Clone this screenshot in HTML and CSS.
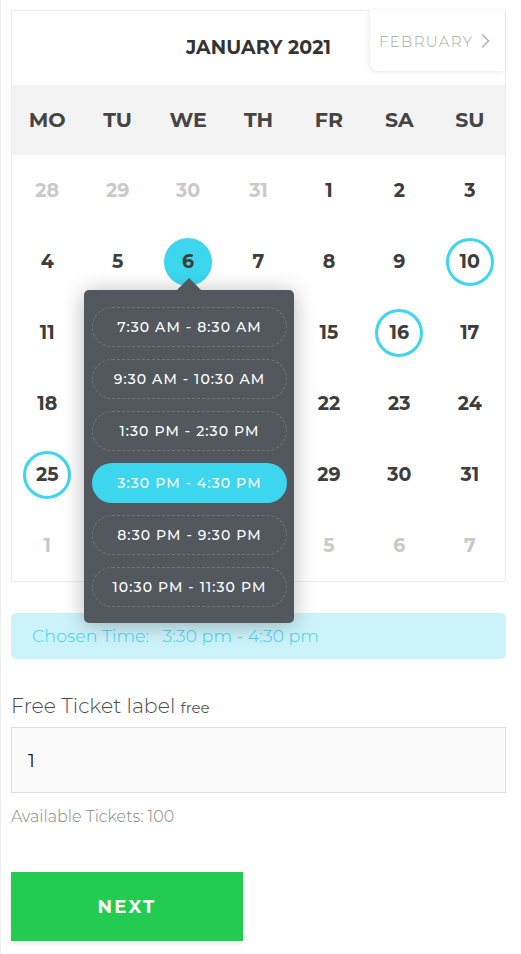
FILE: index.html
```html
<!DOCTYPE html>
<html lang="en">
<head>
<meta charset="utf-8">
<title>Booking</title>
<link rel="stylesheet" href="styles.css">
</head>
<body>
<div class="page">
  <div class="calendar">
    <div class="cal-head">
      <div class="month">JANUARY 2021</div>
      <div class="next-month">FEBRUARY
        <svg class="chev" width="10" height="16" viewBox="0 0 10 16"><path d="M2 1.5 L8.5 8 L2 14.5" fill="none" stroke="#b5b5b5" stroke-width="1.6"/></svg>
      </div>
    </div>
    <div class="weekdays">
      <div>MO</div><div>TU</div><div>WE</div><div>TH</div><div>FR</div><div>SA</div><div>SU</div>
    </div>
    <div class="days">
      <div class="day muted"><span>28</span></div>
      <div class="day muted"><span>29</span></div>
      <div class="day muted"><span>30</span></div>
      <div class="day muted"><span>31</span></div>
      <div class="day"><span>1</span></div>
      <div class="day"><span>2</span></div>
      <div class="day"><span>3</span></div>

      <div class="day"><span>4</span></div>
      <div class="day"><span>5</span></div>
      <div class="day"><span class="selected">6</span></div>
      <div class="day"><span>7</span></div>
      <div class="day"><span>8</span></div>
      <div class="day"><span>9</span></div>
      <div class="day"><span class="avail">10</span></div>

      <div class="day"><span>11</span></div>
      <div class="day covered"><span>12</span></div>
      <div class="day covered"><span>13</span></div>
      <div class="day covered"><span>14</span></div>
      <div class="day"><span>15</span></div>
      <div class="day"><span class="avail">16</span></div>
      <div class="day"><span>17</span></div>

      <div class="day"><span>18</span></div>
      <div class="day covered"><span>19</span></div>
      <div class="day covered"><span>20</span></div>
      <div class="day covered"><span>21</span></div>
      <div class="day"><span>22</span></div>
      <div class="day"><span>23</span></div>
      <div class="day"><span>24</span></div>

      <div class="day"><span class="avail">25</span></div>
      <div class="day covered"><span>26</span></div>
      <div class="day covered"><span>27</span></div>
      <div class="day covered"><span>28</span></div>
      <div class="day"><span>29</span></div>
      <div class="day"><span>30</span></div>
      <div class="day"><span>31</span></div>

      <div class="day muted"><span>1</span></div>
      <div class="day muted covered"><span>2</span></div>
      <div class="day muted covered"><span>3</span></div>
      <div class="day muted covered"><span>4</span></div>
      <div class="day muted"><span>5</span></div>
      <div class="day muted"><span>6</span></div>
      <div class="day muted"><span>7</span></div>
    </div>

    <div class="popover">
      <div class="slot">7:30 AM - 8:30 AM</div>
      <div class="slot">9:30 AM - 10:30 AM</div>
      <div class="slot">1:30 PM - 2:30 PM</div>
      <div class="slot active">3:30 PM - 4:30 PM</div>
      <div class="slot">8:30 PM - 9:30 PM</div>
      <div class="slot">10:30 PM - 11:30 PM</div>
    </div>
  </div>

  <div class="chosen">Chosen Time:&nbsp;&nbsp; 3:30 pm - 4:30 pm</div>

  <div class="ticket-label">Free Ticket label <small>free</small></div>
  <div class="qty">1</div>
  <div class="avail-text">Available Tickets: 100</div>

  <button class="next-btn">NEXT</button>
</div>
</body>
</html>
```
FILE: styles.css
```css
* { box-sizing: border-box; }
html, body { margin: 0; padding: 0; background: #fff; }
body {
  font-family: "Montserrat", Inter, "Noto Sans", sans-serif;
  color: #444;
}
.page {
  width: 521px;
  min-height: 954px;
  padding: 10px 15px 0 10px;
  border-left: 1px solid #f0f0f0;
}
.calendar {
  position: relative;
  width: 495px;
  border: 1px solid #ececec;
}
.cal-head {
  position: relative;
  height: 74px;
  display: flex;
  align-items: center;
  justify-content: center;
}
.month {
  font-weight: 700;
  font-size: 19px;
  color: #333;
  letter-spacing: 0.1px;
  margin-top: -1px;
}
.next-month {
  position: absolute;
  top: -1px;
  right: 0;
  width: 135px;
  height: 61px;
  display: flex;
  align-items: center;
  justify-content: flex-start;
  gap: 7px;
  padding-left: 9px;
  padding-top: 1px;
  font-size: 15px;
  font-weight: 300;
  letter-spacing: 1.3px;
  color: #a8a8a8;
  background: #fff;
  border-radius: 0 0 0 8px;
  box-shadow: -1px 1px 4px rgba(0,0,0,0.09);
}
.chev { margin-top: -1px; }
.weekdays {
  display: grid;
  grid-template-columns: repeat(7, 1fr);
  background: #f3f3f3;
  height: 70px;
  align-items: center;
  text-align: center;
  font-weight: 700;
  font-size: 20.5px;
  color: #444;
  padding-bottom: 1px;
}
.days {
  display: grid;
  grid-template-columns: repeat(7, 1fr);
  grid-auto-rows: 71px;
}
.day {
  display: flex;
  align-items: center;
  justify-content: center;
  font-weight: 700;
  font-size: 19px;
  color: #3d3d3d;
}
.day span {
  width: 48px;
  height: 48px;
  border-radius: 50%;
  display: flex;
  align-items: center;
  justify-content: center;
}
.day.muted { color: #c9c9c9; }
.day.covered span { visibility: hidden; }
.day .avail { border: 3px solid #3dd6ef; }
.day .selected { background: #3dd6ef; }

.popover {
  position: absolute;
  left: 72px;
  top: 279px;
  width: 210px;
  padding: 17px 7px 16px 8px;
  background: #53585f;
  border-radius: 5px;
  box-shadow: 0 2px 22px rgba(0,0,0,0.28);
  display: flex;
  flex-direction: column;
  gap: 12px;
}
.popover::before {
  content: "";
  position: absolute;
  top: -12px;
  left: 93px;
  border-left: 12px solid transparent;
  border-right: 12px solid transparent;
  border-bottom: 12px solid #53585f;
}
.slot {
  height: 40px;
  border-radius: 20px;
  border: 1px dashed rgba(255,255,255,0.18);
  color: #fff;
  font-size: 14px;
  font-weight: 500;
  letter-spacing: 1.1px;
  display: flex;
  align-items: center;
  justify-content: center;
}
.slot.active {
  background: #3dd6ef;
  border-color: #3dd6ef;
}

.chosen {
  margin-top: 31px;
  width: 495px;
  height: 46px;
  background: #cdf3fa;
  border-radius: 5px;
  color: #3fd2ec;
  font-size: 17.5px;
  font-weight: 300;
  padding: 0 0 2px 21px;
  display: flex;
  align-items: center;
}
.ticket-label {
  margin-top: 35px;
  font-size: 20.5px;
  font-weight: 300;
  color: #4a4a4a;
  line-height: 24px;
}
.ticket-label small {
  font-size: 15px;
  font-weight: 400;
  color: #555;
}
.qty {
  margin-top: 7px;
  width: 495px;
  height: 66px;
  background: #fafafa;
  border: 1px solid #dedede;
  padding-left: 16px;
  display: flex;
  align-items: center;
  font-size: 19px;
  color: #2a1414;
}
.avail-text {
  margin-top: 14px;
  font-size: 16px;
  font-weight: 300;
  color: #858585;
}
.next-btn {
  margin-top: 46px;
  width: 232px;
  height: 69px;
  border: none;
  background: #24cb51;
  color: #fff;
  font-family: inherit;
  font-weight: 700;
  font-size: 18px;
  letter-spacing: 2.2px;
  box-shadow: 0 2px 4px rgba(0,0,0,0.12);
  display: block;
}
```
